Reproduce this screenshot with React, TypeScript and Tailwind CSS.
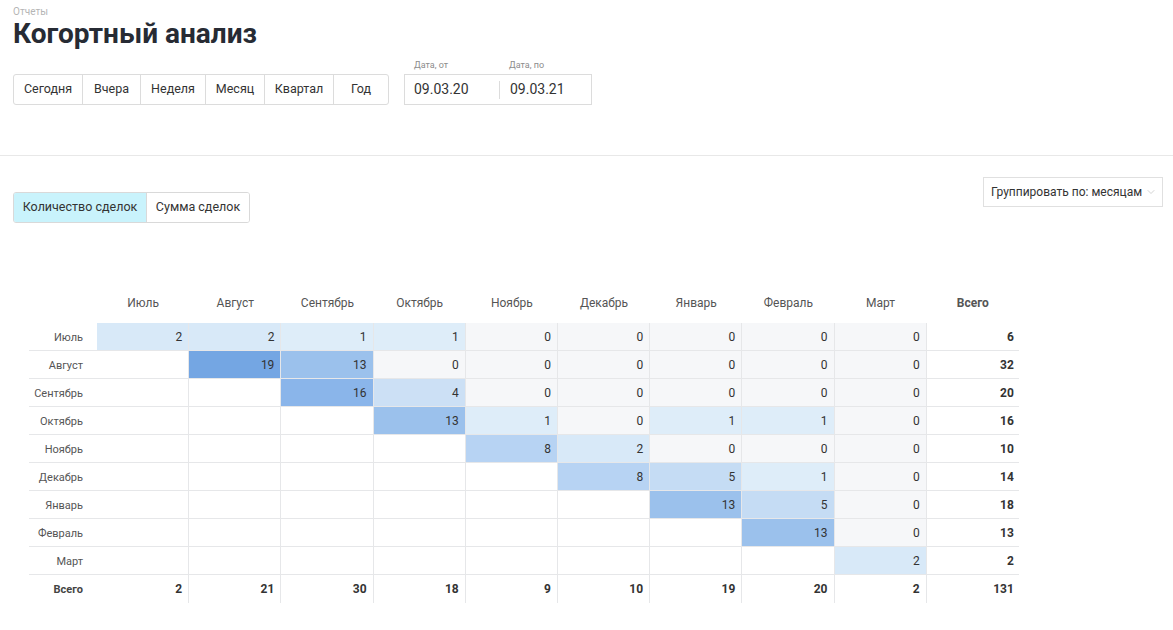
import { ChevronDown } from "lucide-react";

const months = [
  "Июль",
  "Август",
  "Сентябрь",
  "Октябрь",
  "Ноябрь",
  "Декабрь",
  "Январь",
  "Февраль",
  "Март",
];

// null = пустая ячейка (до начала когорты)
const rows: { label: string; values: (number | null)[]; total: number }[] = [
  { label: "Июль", values: [2, 2, 1, 1, 0, 0, 0, 0, 0], total: 6 },
  { label: "Август", values: [null, 19, 13, 0, 0, 0, 0, 0, 0], total: 32 },
  { label: "Сентябрь", values: [null, null, 16, 4, 0, 0, 0, 0, 0], total: 20 },
  { label: "Октябрь", values: [null, null, null, 13, 1, 0, 1, 1, 0], total: 16 },
  { label: "Ноябрь", values: [null, null, null, null, 8, 2, 0, 0, 0], total: 10 },
  { label: "Декабрь", values: [null, null, null, null, null, 8, 5, 1, 0], total: 14 },
  { label: "Январь", values: [null, null, null, null, null, null, 13, 5, 0], total: 18 },
  { label: "Февраль", values: [null, null, null, null, null, null, null, 13, 0], total: 13 },
  { label: "Март", values: [null, null, null, null, null, null, null, null, 2], total: 2 },
];

const totals = [2, 21, 30, 18, 9, 10, 19, 20, 2];

const heat: Record<number, string> = {
  0: "bg-[#f6f7f9]",
  1: "bg-[#deedf9]",
  2: "bg-[#d8e9f8]",
  4: "bg-[#cce0f5]",
  5: "bg-[#c5dcf4]",
  8: "bg-[#b7d3f3]",
  13: "bg-[#9bc1ec]",
  16: "bg-[#8ab5ea]",
  19: "bg-[#74a6e3]",
};

const periods = [
  { label: "Сегодня", w: "w-[68px]" },
  { label: "Вчера", w: "w-[58px]" },
  { label: "Неделя", w: "w-[65px]" },
  { label: "Месяц", w: "w-[59px]" },
  { label: "Квартал", w: "w-[69px]" },
  { label: "Год", w: "w-[55px]" },
];

function Cell({ value }: { value: number | null }) {
  const bg = value === null ? "bg-white" : heat[value] ?? "bg-white";
  return (
    <div
      className={`w-[92.2px] h-full border-r border-[#e6e7e9] flex items-center justify-end pr-[6px] text-[12px] text-[#333] ${bg}`}
    >
      {value}
    </div>
  );
}

export default function App() {
  return (
    <div className="w-full min-h-[630px] bg-white text-[#333] font-['Roboto','Noto_Sans',sans-serif]">
      {/* Header */}
      <div className="px-[13px] pt-[5px]">
        <div className="text-[10px] leading-[14px] text-[#b5b5b5]">Отчеты</div>
        <h1 className="text-[28px] leading-[30px] font-bold text-[#272b34]">
          Когортный анализ
        </h1>

        <div className="flex items-end gap-[15px] mt-[10px]">
          <div className="flex h-[31px] border border-[#dcdcdc] rounded-[3px] overflow-hidden">
            {periods.map((p, i) => (
              <button
                key={p.label}
                className={`${p.w} h-full flex items-center justify-center text-[12.5px] text-[#333] ${
                  i > 0 ? "border-l border-[#dcdcdc]" : ""
                }`}
              >
                {p.label}
              </button>
            ))}
          </div>

          <div className="flex flex-col">
            <div className="flex text-[9px] leading-[12px] text-[#8c8c8c] mb-[3px]">
              <span className="w-[95px] pl-[10px]">Дата, от</span>
              <span className="pl-[10px]">Дата, по</span>
            </div>
            <div className="flex items-center w-[188px] h-[31px] border border-[#dcdcdc]">
              <div className="w-[94px] pl-[9px] text-[14px] text-[#333]">09.03.20</div>
              <div className="w-px h-[18px] bg-[#dcdcdc]" />
              <div className="pl-[10px] text-[14px] text-[#333]">09.03.21</div>
            </div>
          </div>
        </div>
      </div>

      <div className="mt-[50px] border-t border-[#e8e8e8]" />

      {/* Controls */}
      <div className="flex justify-between items-start pl-[13px] pr-[10px] pt-[21px]">
        <div className="flex mt-[15px] h-[31px] border border-[#d9d9d9] rounded-[3px] overflow-hidden text-[12.5px]">
          <button className="w-[133px] h-full bg-[#c9f3fc] text-[#333] border-r border-[#d9d9d9]">
            Количество сделок
          </button>
          <button className="w-[102px] h-full bg-white text-[#333]">Сумма сделок</button>
        </div>

        <div className="flex items-center justify-between w-[180px] h-[30px] border border-[#e0e0e0] pl-[7px] pr-[5px]">
          <span className="text-[12px] text-[#333] whitespace-nowrap">Группировать по: месяцам</span>
          <ChevronDown size={12} className="text-[#c4c4c4] shrink-0" strokeWidth={1.5} />
        </div>
      </div>

      {/* Table */}
      <div className="ml-[29px] mt-[67px] w-fit">
        <div className="flex h-[33px] items-center pb-[7px] text-[12px] text-[#555]">
          <div className="w-[68px]" />
          {months.map((m) => (
            <div key={m} className="w-[92.2px] text-center">
              {m}
            </div>
          ))}
          <div className="w-[92.2px] text-center font-bold">Всего</div>
        </div>

        {rows.map((r) => (
          <div key={r.label} className="flex h-[28px] border-b border-[#e6e7e9]">
            <div className="w-[68px] flex items-center justify-end pr-[14px] pt-[3px] text-[11px] text-[#555]">
              {r.label}
            </div>
            {r.values.map((v, i) => (
              <Cell key={i} value={v} />
            ))}
            <div className="w-[92.2px] flex items-center justify-end pr-[5px] text-[12px] font-bold text-[#333]">
              {r.total}
            </div>
          </div>
        ))}

        <div className="flex h-[28px]">
          <div className="w-[68px] flex items-center justify-end pr-[14px] pt-[2px] text-[11px] font-bold text-[#444]">
            Всего
          </div>
          {totals.map((t, i) => (
            <div
              key={i}
              className="w-[92.2px] h-full border-r border-[#e6e7e9] flex items-center justify-end pr-[6px] text-[12px] font-bold text-[#333]"
            >
              {t}
            </div>
          ))}
          <div className="w-[92.2px] flex items-center justify-end pr-[5px] text-[12px] font-bold text-[#333]">
            131
          </div>
        </div>
      </div>
    </div>
  );
}
